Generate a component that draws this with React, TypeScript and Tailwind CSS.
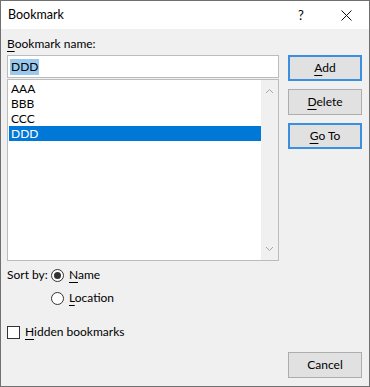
import React from "react";

const items = ["AAA", "BBB", "CCC", "DDD"];

function U({ children }: { children: React.ReactNode }) {
  return <span className="underline underline-offset-[3px]">{children}</span>;
}

function Radio({ checked }: { checked?: boolean }) {
  return (
    <span className="w-[13px] h-[13px] rounded-full border border-[#333333] bg-white flex items-center justify-center">
      {checked && <span className="w-[7px] h-[7px] rounded-full bg-[#333333]" />}
    </span>
  );
}

function Chevron({ up }: { up?: boolean }) {
  return (
    <svg width="9" height="6" viewBox="0 0 9 6" className="text-[#a6a6a6]">
      <path d={up ? "M1 5 L4.5 1.5 L8 5" : "M1 1 L4.5 4.5 L8 1"} fill="none" stroke="currentColor" strokeWidth="1" />
    </svg>
  );
}

function Btn({ children, primary }: { children: React.ReactNode; primary?: boolean }) {
  return (
    <button
      className={`w-[74px] h-[26px] bg-[#e1e1e1] flex items-center justify-center ${
        primary ? "border-2 border-[#3b8fe0]" : "border border-[#adadad]"
      }`}
    >
      {children}
    </button>
  );
}

export default function App() {
  return (
    <div className="w-[370px] h-[387px] border border-[#707070] bg-[#f0f0f0] flex flex-col font-['Lato',sans-serif] text-[12px] leading-4 text-black">
      {/* Title bar */}
      <div className="h-[28px] bg-white flex items-center pl-[7px] shrink-0">
        <span className="flex-1 text-[12.5px]">Bookmark</span>
        <span className="w-[20px] text-center text-[13px] mr-[30px]">?</span>
        <svg width="11" height="11" viewBox="0 0 11 11" className="mr-[17px]">
          <path d="M0.5 0.5 L10.5 10.5 M10.5 0.5 L0.5 10.5" stroke="#111" strokeWidth="1" />
        </svg>
      </div>

      <div className="flex-1 flex pl-[6px] pt-[7px]">
        {/* Left column */}
        <div className="w-[272px] flex flex-col">
          <div>
            <U>B</U>ookmark name:
          </div>
          <div className="mt-[3px] h-[23px] border border-[#bcbcbc] bg-white flex items-center pl-[2px]">
            <span className="bg-[#99c9ef] px-px leading-[16px]">DDD</span>
          </div>
          <div className="mt-px h-[182px] border border-[#bcbcbc] bg-white flex">
            <div className="flex-1 pt-px pl-px">
              {items.map((it) => (
                <div
                  key={it}
                  className={`h-[15px] leading-[15px] pl-[2px] ${it === "DDD" ? "bg-[#0078d7] text-white" : ""}`}
                >
                  {it}
                </div>
              ))}
            </div>
            <div className="w-[17px] bg-[#f0f0f0] flex flex-col items-center justify-between py-[8px]">
              <Chevron up />
              <Chevron />
            </div>
          </div>

          <div className="mt-[6px] flex">
            <span className="w-[44px]">Sort by:</span>
            <div className="flex flex-col gap-[7px]">
              <label className="flex items-center gap-[5px]">
                <Radio checked />
                <span>
                  <U>N</U>ame
                </span>
              </label>
              <label className="flex items-center gap-[5px]">
                <Radio />
                <span>
                  <U>L</U>ocation
                </span>
              </label>
            </div>
          </div>

          <label className="mt-[18px] flex items-center gap-[5px]">
            <span className="w-[13px] h-[13px] border border-[#333333] bg-white" />
            <span>
              <U>H</U>idden bookmarks
            </span>
          </label>
        </div>

        {/* Right column */}
        <div className="ml-[9px] flex flex-col pt-[19px]">
          <div className="flex flex-col gap-[8px]">
            <Btn primary>
              <U>A</U>dd
            </Btn>
            <Btn>
              <U>D</U>elete
            </Btn>
            <Btn primary>
              <U>G</U>o To
            </Btn>
          </div>
          <div className="mt-auto mb-[8px]">
            <Btn>Cancel</Btn>
          </div>
        </div>
      </div>
    </div>
  );
}
